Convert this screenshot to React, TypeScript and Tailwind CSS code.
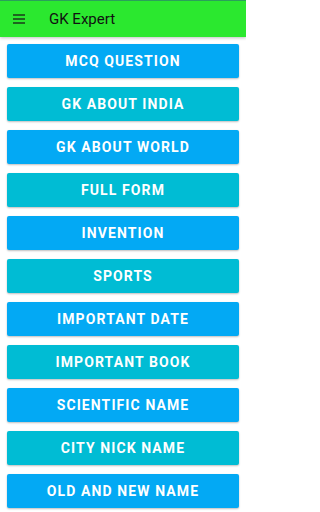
const items = [
  "MCQ QUESTION",
  "GK ABOUT INDIA",
  "GK ABOUT WORLD",
  "FULL FORM",
  "INVENTION",
  "SPORTS",
  "IMPORTANT DATE",
  "IMPORTANT BOOK",
  "SCIENTIFIC NAME",
  "CITY NICK NAME",
  "OLD AND NEW NAME",
];

export default function App() {
  return (
    <div className="w-[246px] h-[512px] bg-white overflow-hidden font-['Roboto',sans-serif]">
      {/* Toolbar */}
      <div className="h-[37px] bg-[#2be82f] border-t border-[#2aa05a] flex items-center shadow-[0_1px_3px_rgba(0,0,0,0.25)] relative">
        <svg className="ml-[12px] w-[14px] h-[14px]" viewBox="0 0 14 14" fill="none">
          <path d="M1 3h12M1 7h12M1 11h12" stroke="#1b3a1b" strokeWidth="1.5" />
        </svg>
        <span className="ml-[23px] text-[15px] text-[#111] leading-none">GK Expert</span>
      </div>

      {/* Menu buttons */}
      <div className="flex flex-col gap-[9px] px-[7px] pt-[7px]">
        {items.map((label, i) => (
          <button
            key={label}
            className={
              "h-[34px] w-full rounded-[2px] text-white font-bold text-[14px] tracking-[1.1px] shadow-[0_1px_2px_rgba(0,0,0,0.25)] " +
              (i % 2 === 0 ? "bg-[#03a9f4]" : "bg-[#00bcd4]")
            }
          >
            {label}
          </button>
        ))}
      </div>
    </div>
  );
}
